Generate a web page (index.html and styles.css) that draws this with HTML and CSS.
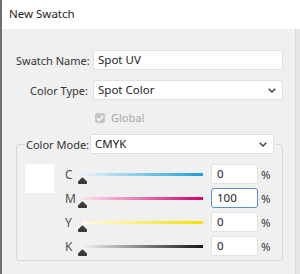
FILE: index.html
```html
<!DOCTYPE html>
<html lang="en">
<head>
    <meta charset="UTF-8">
    <meta name="viewport" content="width=device-width, initial-scale=1.0">
    <title>New Swatch</title>
    <link rel="stylesheet" href="styles.css">
</head>
<body>

    <div class="window">
        <!-- Title -->
        <div class="titlebar">New Swatch</div>

        <div class="content">
            <div class="form-row">
                <span class="field-label">Swatch Name:</span>
                <div class="textbox">Spot UV</div>
            </div>

            <div class="form-row">
                <span class="field-label">Color Type:</span>
                <div class="dropdown">
                    <span>Spot Color</span>
                    <svg class="chevron" width="8" height="5" viewBox="0 0 8 5"><polyline points="0.8,0.8 4,4 7.2,0.8" fill="none" stroke="#444" stroke-width="1.5"/></svg>
                </div>
            </div>

            <div class="form-row check-row">
                <span></span>
                <div class="check-wrap">
                    <span class="checkbox">
                        <svg width="10" height="10" viewBox="0 0 10 10"><polyline points="2,5.2 4.2,7.4 8.2,2.8" fill="none" stroke="#fff" stroke-width="1.5"/></svg>
                    </span>
                    <span class="check-label">Global</span>
                </div>
            </div>

            <!-- Color mode group -->
            <fieldset class="mode-group">
                <legend class="mode-legend">
                    <span class="legend-label">Color Mode:</span>
                    <div class="dropdown mode-select">
                        <span>CMYK</span>
                        <svg class="chevron" width="8" height="5" viewBox="0 0 8 5"><polyline points="0.8,0.8 4,4 7.2,0.8" fill="none" stroke="#444" stroke-width="1.5"/></svg>
                    </div>
                </legend>

                <div class="mode-body">
                    <div class="swatch-preview"></div>
                    <div class="channels">
                        <div class="channel">
                            <span class="channel-letter">C</span>
                            <div class="slider"><div class="track track-c"></div><svg class="thumb" width="9" height="7" viewBox="0 0 9 7"><path d="M0 6.2V4.6L3.6 0.9a1.2 1.2 0 0 1 1.8 0L9 4.6v1.6a.8.8 0 0 1-.8.8H.8A.8.8 0 0 1 0 6.2z" fill="#3a3a3a"/></svg></div>
                            <div class="value-box">0</div>
                            <span class="pct">%</span>
                        </div>
                        <div class="channel">
                            <span class="channel-letter">M</span>
                            <div class="slider"><div class="track track-m"></div><svg class="thumb" width="9" height="7" viewBox="0 0 9 7"><path d="M0 6.2V4.6L3.6 0.9a1.2 1.2 0 0 1 1.8 0L9 4.6v1.6a.8.8 0 0 1-.8.8H.8A.8.8 0 0 1 0 6.2z" fill="#3a3a3a"/></svg></div>
                            <div class="value-box focused">100</div>
                            <span class="pct">%</span>
                        </div>
                        <div class="channel">
                            <span class="channel-letter">Y</span>
                            <div class="slider"><div class="track track-y"></div><svg class="thumb" width="9" height="7" viewBox="0 0 9 7"><path d="M0 6.2V4.6L3.6 0.9a1.2 1.2 0 0 1 1.8 0L9 4.6v1.6a.8.8 0 0 1-.8.8H.8A.8.8 0 0 1 0 6.2z" fill="#3a3a3a"/></svg></div>
                            <div class="value-box">0</div>
                            <span class="pct">%</span>
                        </div>
                        <div class="channel">
                            <span class="channel-letter">K</span>
                            <div class="slider"><div class="track track-k"></div><svg class="thumb" width="9" height="7" viewBox="0 0 9 7"><path d="M0 6.2V4.6L3.6 0.9a1.2 1.2 0 0 1 1.8 0L9 4.6v1.6a.8.8 0 0 1-.8.8H.8A.8.8 0 0 1 0 6.2z" fill="#3a3a3a"/></svg></div>
                            <div class="value-box">0</div>
                            <span class="pct">%</span>
                        </div>
                    </div>
                </div>
            </fieldset>
        </div>
    </div>

</body>
</html>
```

FILE: styles.css
```css
body {
    font-family: "Noto Sans", Arial, sans-serif;
    font-size: 11px;
    color: #333;
    background-color: #e6e6e6;
    margin: 0;
}
.window {
    width: 300px;
    height: 274px;
    box-sizing: border-box;
    border-left: 2px solid #6f6f6f;
    overflow: hidden;
}
.titlebar {
    height: 29px;
    line-height: 28px;
    padding-left: 7px;
    background: #fff;
    color: #222;
    font-size: 11.5px;
}
.content {
    height: 245px;
    margin-right: 4px;
    border-right: 1px solid #d9d9d9;
    background: #f0f0f0;
    padding: 21px 12px 0 14px;
    box-sizing: border-box;
}
.form-row {
    display: grid;
    grid-template-columns: 72px 1fr;
    column-gap: 5px;
    height: 20px;
    margin-bottom: 10px;
    align-items: center;
}
.field-label {
    text-align: right;
    white-space: nowrap;
}
.textbox,
.dropdown {
    height: 20px;
    box-sizing: border-box;
    background: #fff;
    border: 1px solid #e0e0e0;
    border-radius: 2px;
    padding: 0 4px;
    line-height: 18px;
    color: #222;
    font-size: 11.5px;
}
.dropdown {
    display: flex;
    justify-content: space-between;
    align-items: center;
    padding-right: 6px;
}
.check-row {
    height: 14px;
}
.check-wrap {
    display: flex;
    align-items: center;
    gap: 6px;
    padding-left: 2px;
}
.checkbox {
    width: 10px;
    height: 10px;
    border-radius: 2px;
    background: #c6c6c6;
    display: flex;
}
.check-label {
    color: #a8a8a8;
}
.mode-group {
    margin: 10px 0 0 0;
    padding: 10px 10px 0 8px;
    height: 127px;
    min-inline-size: 0;
    box-sizing: border-box;
    border: 1px solid #d8d8d8;
    border-radius: 3px;
}
.mode-legend {
    display: flex;
    align-items: center;
    gap: 3px;
    padding: 0 2px 0 1px;
}
.legend-label {
    width: 61px;
    white-space: nowrap;
}
.mode-select {
    width: 184px;
}
.mode-body {
    display: flex;
    gap: 8px;
}
.swatch-preview {
    width: 29px;
    height: 29px;
    background: #fff;
}
.channels {
    display: flex;
    flex-direction: column;
    gap: 4px;
}
.channel {
    display: grid;
    grid-template-columns: 18px 125px 47px 10px;
    height: 20px;
    align-items: center;
}
.channel-letter {
    padding-left: 3px;
    color: #4a4f57;
    font-size: 12px;
}
.slider {
    position: relative;
    height: 20px;
}
.track {
    height: 3px;
    margin: 9px 2px 0 2px;
}
.track-c {
    background: linear-gradient(to right, #e6f3fa, #1ba0d8);
}
.track-m {
    background: linear-gradient(to right, #f8e4ee, #d4006e);
}
.track-y {
    background: linear-gradient(to right, #fffbe6, #f1e200);
}
.track-k {
    background: linear-gradient(to right, #f2f2f2, #151515);
}
.thumb {
    position: absolute;
    left: -2px;
    top: 13px;
}
.value-box {
    margin-left: 6px;
    width: 47px;
    height: 20px;
    box-sizing: border-box;
    background: #fff;
    border: 1px solid #e2e2e2;
    border-radius: 2px;
    padding-left: 5px;
    line-height: 18px;
    color: #222;
    font-size: 11.5px;
}
.value-box.focused {
    border-color: #5a8fd2;
    border-radius: 3px;
}
.pct {
    padding-left: 9px;
    font-size: 11.5px;
}
```
